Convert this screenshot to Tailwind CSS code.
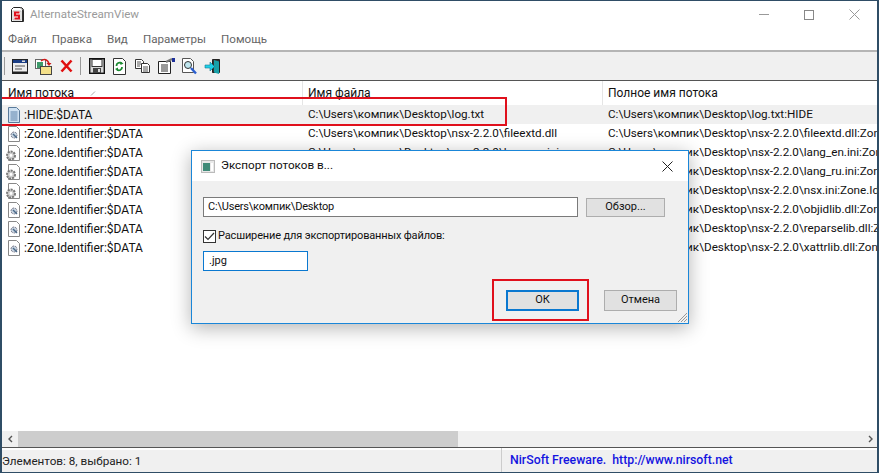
<!DOCTYPE html>
<html lang="ru">
<head>
<meta charset="UTF-8" />
<title>AlternateStreamView</title>
<script src="https://cdn.jsdelivr.net/npm/@tailwindcss/browser@4"></script>
</head>
<body class="bg-white overflow-hidden">
<div class="relative w-[879px] h-[473px] overflow-hidden flex flex-col border-x-2 border-t border-b border-[#2f4d66] bg-white text-[12px] text-[#111] font-['Roboto','Noto_Sans',sans-serif]">

  <!-- title bar -->
  <div class="h-[27px] shrink-0 flex items-center">
    <svg class="ml-[8px] mr-[5px]" width="15" height="17" viewBox="0 0 15 17"><path d="M1.500 3.500l2-2h8l2 2v12h-12z" fill="#fff" stroke="#222"/><path d="M10 1.500l3.500 3" stroke="#777"/><rect x="12" y="4" width="1.500" height="11" fill="#333"/><rect x="3" y="5" width="8" height="9" fill="#fff" stroke="#888" stroke-width=".5"/><path d="M9.500 6.500H5v3h4v3H4.500" fill="none" stroke="#e0101c" stroke-width="2"/></svg>
    <span class="text-[11.600px] text-[#9a9a9a]">AlternateStreamView</span>
    <div class="ml-auto flex items-center gap-[35px] mr-[17px]">
      <div class="w-[10px] h-px bg-[#999]"></div>
      <div class="w-[10px] h-[10px] border border-[#888]"></div>
      <svg width="11" height="11" viewBox="0 0 11 11"><path d="M.5.500l10 10M10.500.500l-10 10" stroke="#999" fill="none"/></svg>
    </div>
  </div>

  <!-- menu -->
  <div class="h-[24px] shrink-0 flex items-center gap-[15px] pl-[6px] pt-[2px] text-[11.600px] text-[#666] border-b-2 border-[#b5b5b5]">
    <span>Файл</span><span>Правка</span><span>Вид</span><span>Параметры</span><span>Помощь</span>
  </div>

  <!-- toolbar -->
  <div class="h-[29px] shrink-0 flex items-center bg-[#f0f0f0] border-b border-[#555] pl-[2px]">
    <div class="w-px h-[18px] bg-[#999] mr-[7px]"></div>
    <svg class="mr-[7px]" width="16" height="15" viewBox="0 0 16 15"><rect x=".5" y=".5" width="15" height="14" fill="#eee" stroke="#222"/><rect x="1" y="1" width="14" height="3" fill="#1c3f86"/><rect x="10" y="1.500" width="3" height="1.500" fill="#ddd"/><path d="M3 7h10M3 10h7" stroke="#555"/><path d="M1 13.500h14" stroke="#222" stroke-width="2"/></svg>
    <svg class="mr-[8px]" width="17" height="17" viewBox="0 0 17 17"><rect x=".5" y="1.500" width="10" height="9" fill="#fff" stroke="#666"/><rect x="2" y="4" width="6" height="6" fill="#3e9a6a"/><rect x="5.500" y="8.500" width="11" height="8" fill="#f4e08a" stroke="#444"/><path d="M6 3c3-2.500 7-2 8 3" stroke="#d01818" fill="none" stroke-width="1.500"/><path d="M11.500 5h5l-2.500 3z" fill="#d01818"/></svg>
    <svg class="mr-[7px]" width="13" height="14" viewBox="0 0 13 14"><path d="M1.500 1.500l10 11M11.500 1.500l-10 11" stroke="#e01010" stroke-width="2.600" fill="none"/></svg>
    <div class="w-px h-[18px] bg-[#999] mr-[8px]"></div>
    <svg class="mr-[7px]" width="16" height="16" viewBox="0 0 16 16"><rect x=".7" y=".7" width="14.600" height="14.600" fill="#d8d8d8" stroke="#111" stroke-width="1.400"/><rect x="3" y="1.500" width="10" height="7" fill="#fff" stroke="#333"/><rect x="4" y="10" width="8" height="5" fill="#444"/><rect x="9" y="11" width="2" height="3" fill="#ddd"/></svg>
    <svg class="mr-[8px]" width="15" height="17" viewBox="0 0 15 17"><path d="M1.500.500h9l3 3v13h-12z" fill="#fff" stroke="#333"/><path d="M4.500 8a3 3 0 0 1 5-2.500M10 9a3 3 0 0 1-5 2.500" fill="none" stroke="#1a8a30" stroke-width="1.800"/><path d="M8.500 3.500l3 2-3 1.500zM6 9.500l-3 1.500 3 2z" fill="#1a8a30"/></svg>
    <svg class="mr-[8px]" width="15" height="14" viewBox="0 0 15 14"><path d="M.5.500h6l2 2v7H.5z" fill="#fff" stroke="#333"/><path d="M2 3h4M2 5h4M2 7h3" stroke="#555"/><path d="M6.500 4.500h6l2 2v7h-8z" fill="#fff" stroke="#333"/><path d="M8 8h5M8 10h5M8 12h5" stroke="#555"/></svg>
    <svg class="mr-[7px]" width="17" height="16" viewBox="0 0 17 16"><path d="M.5 3.500h12v12H.5z" fill="#fff" stroke="#222"/><path d="M3 7h7M3 9h7M3 11h7M3 13h7" stroke="#333"/><path d="M8 4l6-3" stroke="#777" stroke-width="2"/><rect x="14" y="0" width="3" height="4" fill="#1c2f9a"/></svg>
    <svg class="mr-[7px]" width="15" height="17" viewBox="0 0 15 17"><path d="M.5.500h8l3 3v11H.5z" fill="#fff" stroke="#555"/><circle cx="6" cy="7" r="3.500" fill="#bfe6ee" stroke="#333"/><path d="M9 10l5 5.500" stroke="#2a5fd0" stroke-width="2.400"/></svg>
    <svg width="17" height="17" viewBox="0 0 17 17"><path d="M8.500 1.500h7v13h-7z" fill="#333" stroke="#222"/><path d="M10 2l5 1.500V16l-5-1.500z" fill="#18a0a8"/><path d="M1 7h5V4l4.500 4.500L6 13v-3H1z" fill="#1fd0e8" stroke="#117a90" stroke-width=".6"/></svg>
  </div>

  <!-- list -->
  <div class="flex-1 min-h-0 relative overflow-hidden">
    <div class="h-[24px] flex items-center text-[12px]">
      <div class="w-[301px] pl-[6px] relative border-r border-[#e5e5e5] h-full flex items-center">Имя потока
        <svg class="absolute left-[88px] top-[10px]" width="6" height="5" viewBox="0 0 6 5"><path d="M1 4.500L5 .500" stroke="#aaa" fill="none"/></svg>
      </div>
      <div class="w-[300px] pl-[5px] border-r border-[#e5e5e5] h-full flex items-center">Имя файла</div>
      <div class="pl-[5px]">Полное имя потока</div>
    </div>
    <div class="h-[19px] flex items-center whitespace-nowrap bg-[#f0f0f0]">
      <div class="w-[301px] pl-[6px] flex items-center gap-[4px] shrink-0">
        <svg width="12" height="16" viewBox="0 0 12 16"><path d="M.5.500h8l3 3v12H.5z" fill="#cfe1f2" stroke="#5a7a9a"/><path d="M2.500 5h7M2.500 7h7M2.500 9h7M2.500 11h7M2.500 13h7" stroke="#5c82aa"/></svg>
        <span>:HIDE:$DATA</span>
      </div>
      <div class="w-[300px] pl-[5px] shrink-0 text-[11.700px]">C:\Users\компик\Desktop\log.txt</div>
      <div class="pl-[5px] text-[11.700px]">C:\Users\компик\Desktop\log.txt:HIDE</div>
    </div>
    <div id="rows"></div>
  </div>

  <!-- horizontal scrollbar -->
  <div class="h-[16px] shrink-0 flex items-center bg-[#f0f0f0]">
    <span class="w-[16px] flex justify-center"><svg width="5" height="8" viewBox="0 0 5 8"><path d="M4 1L1 4l3 3" stroke="#555" fill="none" stroke-width="1.400"/></svg></span>
    <div class="w-[440px] h-full bg-[#cdcdcd]"></div>
    <span class="ml-auto mr-[4px]"><svg width="5" height="8" viewBox="0 0 5 8"><path d="M1 1l3 3-3 3" stroke="#555" fill="none" stroke-width="1.400"/></svg></span>
  </div>

  <!-- status bar -->
  <div class="h-[25px] shrink-0 flex items-stretch bg-[#f0f0f0] border-t border-[#555] shadow-[inset_0_2px_0_#fff] text-[11.700px]">
    <div class="w-[499px] flex items-center pt-[4px] text-[#222]">Элементов: 8, выбрано: 1</div>
    <div class="flex-1 border-l border-[#ccc] pl-[8px] flex items-center text-[12.300px] text-[#1414e0] font-medium whitespace-pre">NirSoft Freeware.  http://www.nirsoft.net</div>
  </div>

  <!-- red mark on first row -->
  <div class="absolute left-[-2px] top-[96px] w-[507px] h-[29px] border-[2px] border-[#e0101c]"></div>

  <!-- dialog -->
  <div class="absolute left-[189px] top-[149px] w-[498px] h-[174px] bg-[#f0f0f0] border border-[#1a86d8] shadow-[0_4px_18px_rgba(0,0,0,.3)] flex flex-col text-[11px]">
    <div class="h-[30px] shrink-0 bg-white flex items-center pl-[9px]">
      <svg class="mr-[6px]" width="14" height="13" viewBox="0 0 14 13"><rect x=".5" y=".5" width="13" height="12" fill="#e8e8e8" stroke="#bbb"/><rect x="2" y="3" width="7" height="8" fill="#3f8a78"/><rect x="10" y="3" width="2" height="8" fill="#fff"/></svg>
      <span class="text-[11.700px] text-[#111]">Экспорт потоков в...</span>
      <svg class="ml-auto mr-[15px]" width="11" height="11" viewBox="0 0 11 11"><path d="M.5.500l10 10M10.500.500l-10 10" stroke="#222" fill="none"/></svg>
    </div>
    <div class="flex-1 relative px-[11px] pt-[16px]">
      <div class="flex items-center gap-[8px]">
        <div class="w-[375px] h-[20px] bg-white border border-[#7a7a7a] pl-[4px] flex items-center tracking-[-0.2px]">C:\Users\компик\Desktop</div>
        <div class="w-[79px] h-[19px] bg-[#e1e1e1] border border-[#adadad] flex items-center justify-center">Обзор...</div>
      </div>
      <div class="flex items-center gap-[2px] mt-[12px] h-[14px]">
        <div class="w-[13px] h-[13px] bg-white border border-[#333] flex items-center justify-center">
          <svg width="11" height="9" viewBox="0 0 11 9"><path d="M1 4.500l3 3 6-6.500" stroke="#333" fill="none" stroke-width="1.200"/></svg>
        </div>
        <span class="tracking-[-0.15px]">Расширение для экспортированных файлов:</span>
      </div>
      <div class="w-[105px] h-[20px] mt-[8px] bg-white border border-[#0a78d0] pl-[5px] flex items-center">.jpg</div>
      <div class="absolute right-[11px] bottom-[12px] flex gap-[25px]">
        <div class="w-[73px] h-[21px] bg-[#e1e1e1] border-2 border-[#0a78d0] flex items-center justify-center">ОК</div>
        <div class="w-[73px] h-[21px] bg-[#e1e1e1] border border-[#adadad] flex items-center justify-center">Отмена</div>
      </div>
      <svg class="absolute right-0 bottom-0" width="12" height="12" viewBox="0 0 12 12"><path d="M11 2L2 11M11 5l-6 6M11 8l-3 3" stroke="#999" fill="none"/></svg>
      <div class="absolute left-[300px] top-[98px] w-[97px] h-[42px] border-[2px] border-[#e0101c]"></div>
    </div>
  </div>
</div>

<script>
  // remaining stream rows, icon type per row
  const rows = [
    ["doc", "fileextd.dll", "fileextd.dll:Zone.Identifier:$DATA"],
    ["gear", "lang_en.ini", "lang_en.ini:Zone.Identifier:$DATA"],
    ["gear", "lang_ru.ini", "lang_ru.ini:Zone.Identifier:$DATA"],
    ["gear", "nsx.ini", "nsx.ini:Zone.Identifier:$DATA"],
    ["doc", "objidlib.dll", "objidlib.dll:Zone.Identifier:$DATA"],
    ["doc", "reparselib.dll", "reparselib.dll:Zone.Identifier:$DATA"],
    ["doc", "xattrlib.dll", "xattrlib.dll:Zone.Identifier:$DATA"],
  ];
  const gear = '<circle cx="5" cy="10.500" r="4" fill="#ccc" stroke="#777" stroke-width="2" stroke-dasharray="2 1"/><circle cx="5" cy="10.500" r="1.400" fill="#fff"/>';
  const cog = '<circle cx="8" cy="9" r="3" fill="#c8d4e0" stroke="#778" stroke-dasharray="2 1"/><path d="M7 8l4 4" stroke="#4a6a8a" stroke-width="1.400"/>';
  const base = "C:\\Users\\компик\\Desktop\\nsx-2.2.0\\";
  document.getElementById("rows").innerHTML = rows.map(([type, file, full]) => `
    <div class="h-[19px] flex items-center whitespace-nowrap">
      <div class="w-[301px] pl-[4px] flex items-center gap-[4px] shrink-0">
        <svg width="14" height="16" viewBox="0 0 14 16"><path d="M2.500.500h8l3 3v12h-11z" fill="#fff" stroke="#888"/>${type === "gear" ? gear : cog}</svg>
        <span>:Zone.Identifier:$DATA</span>
      </div>
      <div class="w-[300px] pl-[5px] shrink-0 text-[11.700px]">${base}${file}</div>
      <div class="pl-[5px] text-[11.700px]">${base}${full}</div>
    </div>`).join("");
</script>
</body>
</html>
